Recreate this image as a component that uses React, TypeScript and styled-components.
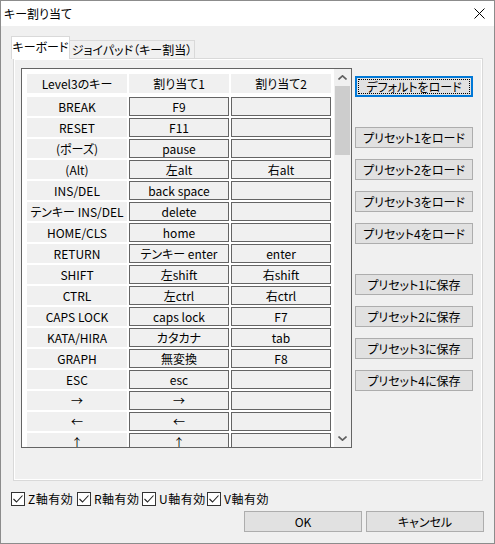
import React from "react";
import styled, { createGlobalStyle } from "styled-components";

const GlobalStyle = createGlobalStyle`
  html, body {
    margin: 0;
    padding: 0;
    background: #f0f0f0;
  }
  * {
    box-sizing: border-box;
  }
`;

const Window = styled.div`
  width: 495px;
  height: 544px;
  border: 1px solid #8c8c8c;
  background: #f0f0f0;
  font-family: "Noto Sans CJK JP", "Noto Sans", sans-serif;
  font-feature-settings: "palt";
  font-size: 12px;
  color: #000;
  display: flex;
  flex-direction: column;
  overflow: hidden;
`;

const TitleBar = styled.div`
  height: 25px;
  background: #fff;
  display: flex;
  align-items: center;
  justify-content: space-between;
  padding: 0 9px 0 3px;
`;

const Title = styled.span`
  font-size: 12px;
  line-height: 16px;
`;

const Body = styled.div`
  flex: 1;
  padding: 10px 11px 0 10px;
  display: flex;
  flex-direction: column;
`;

const TabStrip = styled.div`
  display: flex;
  align-items: flex-end;
  height: 23px;
  margin-bottom: -1px;
  position: relative;
  z-index: 1;
`;

const Tab = styled.div<{ $active?: boolean; $width: number }>`
  width: ${(p) => p.$width}px;
  height: ${(p) => (p.$active ? "23px" : "19px")};
  background: ${(p) => (p.$active ? "#fff" : "#f0f0f0")};
  border: 1px solid #d9d9d9;
  border-bottom: ${(p) => (p.$active ? "none" : "1px solid #d9d9d9")};
  border-left: ${(p) => (p.$active ? "1px solid #d9d9d9" : "none")};
  line-height: ${(p) => (p.$active ? "20px" : "17px")};
  text-align: center;
  white-space: nowrap;
`;

const Panel = styled.div`
  margin-left: 2px;
  width: 470px;
  height: 423px;
  border: 1px solid #d9d9d9;
  box-shadow: inset 1px 1px 0 #fff, inset -1px -1px 0 #fff;
  display: flex;
  align-items: flex-start;
  padding: 9px 0 0 7px;
`;

const ListBox = styled.div`
  width: 331px;
  height: 380px;
  border: 1px solid #646464;
  background: #fff;
  display: flex;
  overflow: hidden;
`;

const Grid = styled.div`
  flex: 1;
  padding: 5px 0 0 5px;
  display: flex;
  flex-direction: column;
  gap: 2px;
`;

const Row = styled.div<{ $header?: boolean }>`
  display: grid;
  grid-template-columns: 100px 100px 100px;
  column-gap: 2px;
  height: 19px;
  flex-shrink: 0;
  margin-bottom: ${(p) => (p.$header ? "2px" : "0")};
`;

const Cell = styled.div<{ $boxed?: boolean }>`
  height: 19px;
  background: #f0f0f0;
  border: ${(p) => (p.$boxed ? "1px solid #646464" : "none")};
  line-height: ${(p) => (p.$boxed ? "17px" : "19px")};
  text-align: center;
  white-space: nowrap;
  overflow: hidden;
`;

const ScrollBar = styled.div`
  width: 17px;
  background: #f0f0f0;
  display: flex;
  flex-direction: column;
  align-items: center;
`;

const ArrowBox = styled.div`
  height: 17px;
  width: 17px;
  display: flex;
  align-items: center;
  justify-content: center;
`;

const Thumb = styled.div`
  width: 15px;
  height: 69px;
  background: #cdcdcd;
`;

const Track = styled.div`
  flex: 1;
`;

const ButtonColumn = styled.div`
  margin-left: 3px;
  padding-top: 8px;
  display: flex;
  flex-direction: column;
`;

const Button = styled.button<{ $gap?: number }>`
  width: 118px;
  height: 21px;
  margin-top: ${(p) => p.$gap ?? 0}px;
  background: #e1e1e1;
  border: 1px solid #adadad;
  font-family: inherit;
  font-feature-settings: "palt";
  font-size: 12px;
  color: #000;
  padding: 0;
  line-height: 17px;
`;

const DefaultButton = styled(Button)`
  border: 2px solid #0078d7;
  outline: 1px dotted #000;
  outline-offset: -4px;
`;

const CheckRow = styled.div`
  display: grid;
  grid-template-columns: 66px 65px 65px auto;
  margin-top: 9px;
  height: 16px;
  align-items: center;
`;

const CheckItem = styled.label`
  display: flex;
  align-items: center;
  gap: 3px;
  white-space: nowrap;
  letter-spacing: 0.5px;
`;

const Box = styled.span`
  width: 14px;
  height: 14px;
  border: 1px solid #333;
  background: #fff;
  display: flex;
  align-items: center;
  justify-content: center;
`;

const BottomRow = styled.div`
  display: flex;
  justify-content: flex-end;
  gap: 4px;
  margin-top: 5px;
  margin-right: -1px;
`;

const keys: [string, string, string][] = [
  ["BREAK", "F9", ""],
  ["RESET", "F11", ""],
  ["(ポーズ)", "pause", ""],
  ["(Alt)", "左alt", "右alt"],
  ["INS/DEL", "back space", ""],
  ["テンキー INS/DEL", "delete", ""],
  ["HOME/CLS", "home", ""],
  ["RETURN", "テンキー enter", "enter"],
  ["SHIFT", "左shift", "右shift"],
  ["CTRL", "左ctrl", "右ctrl"],
  ["CAPS LOCK", "caps lock", "F7"],
  ["KATA/HIRA", "カタカナ", "tab"],
  ["GRAPH", "無変換", "F8"],
  ["ESC", "esc", ""],
  ["→", "→", ""],
  ["←", "←", ""],
  ["↑", "↑", ""],
];

const axes = ["Z軸有効", "R軸有効", "U軸有効", "V軸有効"];

function Check({ label }: { label: string }) {
  return (
    <CheckItem>
      <Box>
        <svg width="10" height="8" viewBox="0 0 10 8">
          <polyline points="0.5,4 3.5,7 9.5,0.5" fill="none" stroke="#222" strokeWidth="1.1" />
        </svg>
      </Box>
      {label}
    </CheckItem>
  );
}

export default function App() {
  return (
    <>
      <GlobalStyle />
      <Window>
        <TitleBar>
          <Title>キー割り当て</Title>
          <svg width="11" height="11" viewBox="0 0 11 11">
            <path d="M0.5 0.5 L10.5 10.5 M10.5 0.5 L0.5 10.5" stroke="#000" strokeWidth="1" />
          </svg>
        </TitleBar>
        <Body>
          <TabStrip>
            <Tab $active $width={59}>キーボード</Tab>
            <Tab $width={125}>ジョイパッド（キー割当）</Tab>
          </TabStrip>
          <Panel>
            <ListBox>
              <Grid>
                <Row $header>
                  <Cell>Level3のキー</Cell>
                  <Cell>割り当て1</Cell>
                  <Cell>割り当て2</Cell>
                </Row>
                {keys.map(([k, a, b]) => (
                  <Row key={k + a}>
                    <Cell>{k}</Cell>
                    <Cell $boxed>{a}</Cell>
                    <Cell $boxed>{b}</Cell>
                  </Row>
                ))}
              </Grid>
              <ScrollBar>
                <ArrowBox>
                  <svg width="9" height="5" viewBox="0 0 9 5">
                    <polyline points="0.5,4.5 4.5,0.8 8.5,4.5" fill="none" stroke="#606060" strokeWidth="1.6" />
                  </svg>
                </ArrowBox>
                <Thumb />
                <Track />
                <ArrowBox>
                  <svg width="9" height="5" viewBox="0 0 9 5">
                    <polyline points="0.5,0.5 4.5,4.2 8.5,0.5" fill="none" stroke="#606060" strokeWidth="1.6" />
                  </svg>
                </ArrowBox>
              </ScrollBar>
            </ListBox>
            <ButtonColumn>
              <DefaultButton>デフォルトをロード</DefaultButton>
              <Button $gap={30}>プリセット1をロード</Button>
              <Button $gap={11}>プリセット2をロード</Button>
              <Button $gap={11}>プリセット3をロード</Button>
              <Button $gap={11}>プリセット4をロード</Button>
              <Button $gap={30}>プリセット1に保存</Button>
              <Button $gap={11}>プリセット2に保存</Button>
              <Button $gap={11}>プリセット3に保存</Button>
              <Button $gap={11}>プリセット4に保存</Button>
            </ButtonColumn>
          </Panel>
          <CheckRow>
            {axes.map((a) => (
              <Check key={a} label={a} />
            ))}
          </CheckRow>
          <BottomRow>
            <Button>OK</Button>
            <Button>キャンセル</Button>
          </BottomRow>
        </Body>
      </Window>
    </>
  );
}
